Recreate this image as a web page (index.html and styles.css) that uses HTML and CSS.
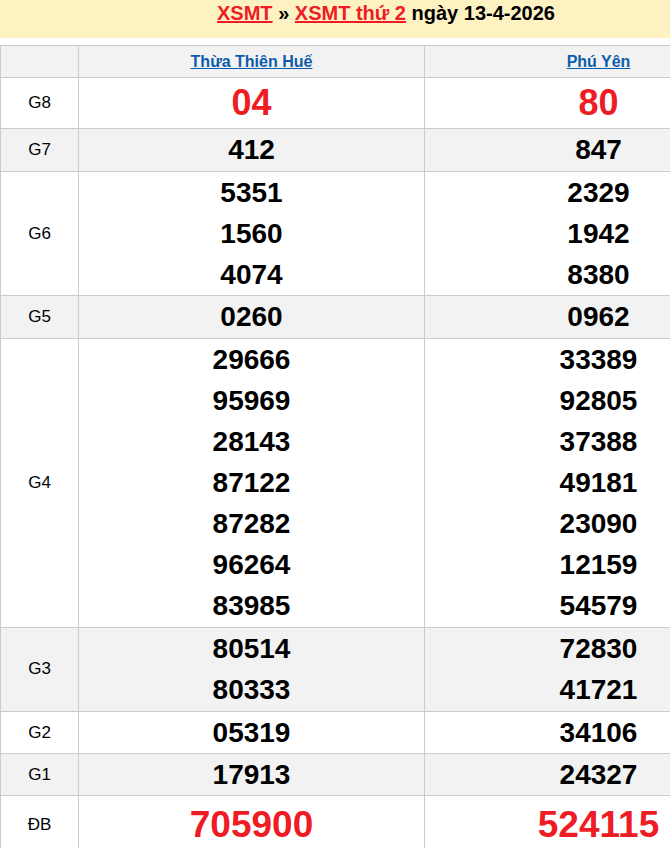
FILE: index.html
```html
<!DOCTYPE html>
<html lang="vi">
<head>
<meta charset="utf-8">
<title>XSMT thứ 2 ngày 13-4-2026</title>
<link rel="stylesheet" href="styles.css">
</head>
<body>
<div class="page">
  <h2 class="title"><a href="#">XSMT</a> » <a href="#">XSMT thứ 2</a> ngày 13-4-2026</h2>
  <table class="kq">
    <colgroup><col class="c-label"><col class="c-prov"><col class="c-prov2"></colgroup>
    <thead>
      <tr class="alt">
        <th></th>
        <th><a href="#">Thừa Thiên Huế</a></th>
        <th><a href="#">Phú Yên</a></th>
      </tr>
    </thead>
    <tbody>
      <tr><td class="lbl">G8</td><td><div class="n g8">04</div></td><td><div class="n g8">80</div></td></tr>
      <tr class="alt pad"><td class="lbl">G7</td><td><div class="n">412</div></td><td><div class="n">847</div></td></tr>
      <tr><td class="lbl">G6</td><td><div class="n">5351</div><div class="n">1560</div><div class="n">4074</div></td><td><div class="n">2329</div><div class="n">1942</div><div class="n">8380</div></td></tr>
      <tr class="alt pad"><td class="lbl">G5</td><td><div class="n">0260</div></td><td><div class="n">0962</div></td></tr>
      <tr class="pad"><td class="lbl">G4</td>
        <td><div class="n">29666</div><div class="n">95969</div><div class="n">28143</div><div class="n">87122</div><div class="n">87282</div><div class="n">96264</div><div class="n">83985</div></td>
        <td><div class="n">33389</div><div class="n">92805</div><div class="n">37388</div><div class="n">49181</div><div class="n">23090</div><div class="n">12159</div><div class="n">54579</div></td></tr>
      <tr class="alt pad"><td class="lbl">G3</td><td><div class="n">80514</div><div class="n">80333</div></td><td><div class="n">72830</div><div class="n">41721</div></td></tr>
      <tr><td class="lbl">G2</td><td><div class="n">05319</div></td><td><div class="n">34106</div></td></tr>
      <tr class="alt"><td class="lbl">G1</td><td><div class="n">17913</div></td><td><div class="n">24327</div></td></tr>
      <tr><td class="lbl">ĐB</td><td><div class="n db">705900</div></td><td><div class="n db">524115</div></td></tr>
    </tbody>
  </table>
</div>
</body>
</html>
```

FILE: styles.css
```css
html, body {
  margin: 0;
  padding: 0;
  background: #ffffff;
}
body {
  font-family: "Liberation Sans", Arial, Helvetica, sans-serif;
  color: #000;
}
.page {
  width: 772px;
}
.title {
  margin: 0 0 7px 0;
  height: 38px;
  box-sizing: border-box;
  padding-top: 1px;
  background: #fff2c2;
  font-size: 20px;
  line-height: 24px;
  font-weight: bold;
  text-align: center;
  color: #000;
}
.title a {
  color: #ee1c25;
  text-decoration: underline;
}
.kq {
  width: 772px;
  border-collapse: collapse;
  table-layout: fixed;
}
.c-label { width: 78px; }
.c-prov { width: 346px; }
.c-prov2 { width: 348px; }
.kq th, .kq td {
  border: 1px solid #cccccc;
  padding: 0;
  text-align: center;
  vertical-align: middle;
}
.kq th {
  height: 31px;
  font-size: 16px;
  font-weight: bold;
}
.kq th a {
  color: #0d5cab;
  text-decoration: underline;
}
.alt th, .alt td {
  background: #f2f2f2;
}
.pad td {
  padding-bottom: 1px;
}
.lbl {
  font-size: 17px;
}
.n {
  font-size: 28px;
  font-weight: bold;
  line-height: 41px;
}
.n.g8 {
  font-size: 36px;
  line-height: 50px;
  color: #ee1c25;
}
.n.db {
  font-size: 37px;
  line-height: 57px;
  color: #ee1c25;
}
```
